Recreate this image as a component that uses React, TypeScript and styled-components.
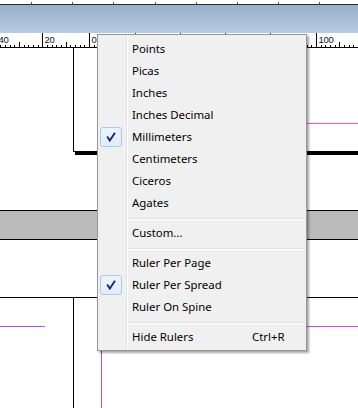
import styled, { createGlobalStyle } from 'styled-components';

const GlobalStyle = createGlobalStyle`
  html, body {
    margin: 0;
    padding: 0;
    background: #ffffff;
  }
  body {
    font-family: "Noto Sans", "Liberation Sans", sans-serif;
  }
`;

const Screen = styled.div`
  position: relative;
  width: 358px;
  height: 408px;
  overflow: hidden;
  display: flex;
  flex-direction: column;
  background: #ffffff;
`;

const TopStrip = styled.div`
  height: 4px;
  flex: none;
  background:
    repeating-linear-gradient(to right, transparent 0 31px, #555 31px 32px, transparent 32px 41.2px)
      0 2px / 100% 2px no-repeat,
    #ffffff;
  border-bottom: 1px solid #2b2b2b;
`;

const TitleBar = styled.div`
  height: 28px;
  flex: none;
  background: linear-gradient(to bottom, #98b0cb, #b7cbe1);
`;

const RulerBar = styled.div`
  height: 15px;
  flex: none;
  background: #ffffff;
  svg {
    display: block;
  }
`;

const Canvas = styled.div`
  flex: 1;
  display: flex;
  flex-direction: column;
  background: #ffffff;
`;

const TopSpread = styled.div`
  height: 107px;
  flex: none;
  display: flex;
`;

const RightPage = styled.div<{ $shadow?: boolean }>`
  flex: 1;
  margin-left: ${(p) => (p.$shadow ? '73px' : '0')};
  height: ${(p) => (p.$shadow ? '104px' : 'auto')};
  box-sizing: border-box;
  border-left: 1px solid #000;
  border-bottom: ${(p) => (p.$shadow ? '1px solid #000' : 'none')};
  box-shadow: ${(p) => (p.$shadow ? '2px 3px 0 #000' : 'none')};
  display: flex;
`;

const MarginGuide = styled.div<{ $edge: 'bottomLeft' | 'topLeft' | 'topRight' }>`
  box-sizing: border-box;
  ${(p) =>
    p.$edge === 'bottomLeft'
      ? `flex: 1; margin: 0 0 27px 27px; border-left: 1px solid #a24cf2; border-bottom: 1px solid #ff4cff;`
      : p.$edge === 'topLeft'
      ? `flex: 1; margin: 28px 0 0 27px; border-left: 1px solid #a24cf2; border-top: 1px solid #d24ce0;`
      : `width: 45px; margin-top: 28px; border-right: 1px solid #a24cf2; border-top: 1px solid #b24cf0;`}
`;

const Pasteboard = styled.div<{ $h: number }>`
  height: ${(p) => p.$h}px;
  flex: none;
`;

const Band = styled.div`
  height: 30px;
  flex: none;
  box-sizing: border-box;
  background: #bbbbbb;
  border-top: 1px solid #000;
  border-bottom: 1px solid #000;
`;

const BottomSpread = styled.div`
  flex: 1;
  display: flex;
  border-top: 1px solid #000;
`;

const LeftPage = styled.div`
  width: 73px;
  flex: none;
  display: flex;
  align-items: flex-start;
`;

const Menu = styled.div`
  position: absolute;
  left: 97px;
  top: 34px;
  width: 210px;
  box-sizing: border-box;
  padding: 3px 0 2px;
  border: 1px solid #979797;
  background: linear-gradient(
    to right,
    #f0f0f0 0 28px,
    #e2e3e3 28px 29px,
    #ffffff 29px 30px,
    #f0f0f0 30px
  );
  box-shadow: 2px 2px 2px rgba(0, 0, 0, 0.35);
  font-family: "Noto Sans", "Liberation Sans", sans-serif;
  font-size: 11.4px;
  color: #000;
`;

const Item = styled.div`
  height: 22px;
  display: grid;
  grid-template-columns: 34px 120px auto;
  align-items: center;
  white-space: nowrap;
`;

const CheckCell = styled.div`
  height: 22px;
  display: flex;
  align-items: center;
`;

const CheckBox = styled.div`
  margin-left: 2px;
  width: 22px;
  height: 20px;
  box-sizing: border-box;
  border: 1px solid #a9c9f2;
  border-radius: 3px;
  background: linear-gradient(to bottom, #eef4fd, #e2ecfb);
  display: flex;
  align-items: center;
  justify-content: center;
`;

const Label = styled.span`
  line-height: 22px;
`;

const Shortcut = styled.span`
  line-height: 22px;
`;

const Separator = styled.div`
  height: 8px;
  box-sizing: border-box;
  padding-top: 4px;
  margin: 0 2px 0 30px;
  &::after {
    content: '';
    display: block;
    border-top: 1px solid #e0e0e0;
    border-bottom: 1px solid #ffffff;
  }
`;

type Entry =
  | { kind: 'item'; label: string; checked?: boolean; shortcut?: string }
  | { kind: 'sep' };

const entries: Entry[] = [
  { kind: 'item', label: 'Points' },
  { kind: 'item', label: 'Picas' },
  { kind: 'item', label: 'Inches' },
  { kind: 'item', label: 'Inches Decimal' },
  { kind: 'item', label: 'Millimeters', checked: true },
  { kind: 'item', label: 'Centimeters' },
  { kind: 'item', label: 'Ciceros' },
  { kind: 'item', label: 'Agates' },
  { kind: 'sep' },
  { kind: 'item', label: 'Custom...' },
  { kind: 'sep' },
  { kind: 'item', label: 'Ruler Per Page' },
  { kind: 'item', label: 'Ruler Per Spread', checked: true },
  { kind: 'item', label: 'Ruler On Spine' },
  { kind: 'sep' },
  { kind: 'item', label: 'Hide Rulers', shortcut: 'Ctrl+R' },
];

const CheckMark = () => (
  <svg width="12" height="12" viewBox="0 0 12 12">
    <path d="M2.2 5.6 L4.8 9.6 L10 1.8" fill="none" stroke="#16258a" strokeWidth="1.9" strokeLinejoin="miter" />
  </svg>
);

const SCALE = 2.33;

// ticks of one ruler segment; labels only where they are not hidden by the menu
function rulerTicks(origin: number, base: number, from: number, to: number, minX: number, maxX: number) {
  const out: JSX.Element[] = [];
  for (let u = from; u <= to; u += 2) {
    const x = Math.round(origin + u * SCALE) + 0.5;
    if (x < minX || x > maxX) continue;
    const a = Math.abs(base + u);
    if (a % 20 === 0) {
      out.push(<line key={`l${origin}${u}`} x1={x} y1={0} x2={x} y2={14} stroke="#000" />);
      out.push(
        <text
          key={`t${origin}${u}`}
          x={x + 2}
          y={10}
          fontSize="9.5"
          letterSpacing="-0.3"
          fontFamily="Liberation Sans, sans-serif"
          fill="#101030"
        >
          {a}
        </text>
      );
    } else if (a % 10 === 0) {
      out.push(<line key={`m${origin}${u}`} x1={x} y1={9} x2={x} y2={14} stroke="#000" />);
    } else {
      out.push(<line key={`s${origin}${u}`} x1={x} y1={12} x2={x} y2={14} stroke="#000" />);
    }
  }
  return out;
}

const ruler = [
  ...rulerTicks(89, 0, -44, 2, -10, 96),
  ...rulerTicks(316, 100, -4, 24, 306, 360),
];

const Ruler = () => (
  <svg width="358" height="15" viewBox="0 0 358 15">
    <line x1={0} y1={14.5} x2={358} y2={14.5} stroke="#000" />
    {[135, 180, 225, 270].map((x) => (
      <line key={x} x1={x + 0.5} y1={0} x2={x + 0.5} y2={1} stroke="#333" />
    ))}
    {ruler}
  </svg>
);

export default function App() {
  return (
    <>
      <GlobalStyle />
      <Screen>
        <TopStrip />
        <TitleBar />
        <RulerBar>
          <Ruler />
        </RulerBar>
        <Canvas>
          <TopSpread>
            <RightPage $shadow>
              <MarginGuide $edge="bottomLeft" />
            </RightPage>
          </TopSpread>
          <Pasteboard $h={55} />
          <Band />
          <Pasteboard $h={57} />
          <BottomSpread>
            <LeftPage>
              <MarginGuide $edge="topRight" />
            </LeftPage>
            <RightPage>
              <MarginGuide $edge="topLeft" />
            </RightPage>
          </BottomSpread>
        </Canvas>
        <Menu>
          {entries.map((e, i) =>
            e.kind === 'sep' ? (
              <Separator key={i} />
            ) : (
              <Item key={i}>
                <CheckCell>
                  {e.checked && (
                    <CheckBox>
                      <CheckMark />
                    </CheckBox>
                  )}
                </CheckCell>
                <Label>{e.label}</Label>
                {e.shortcut && <Shortcut>{e.shortcut}</Shortcut>}
              </Item>
            )
          )}
        </Menu>
      </Screen>
    </>
  );
}
